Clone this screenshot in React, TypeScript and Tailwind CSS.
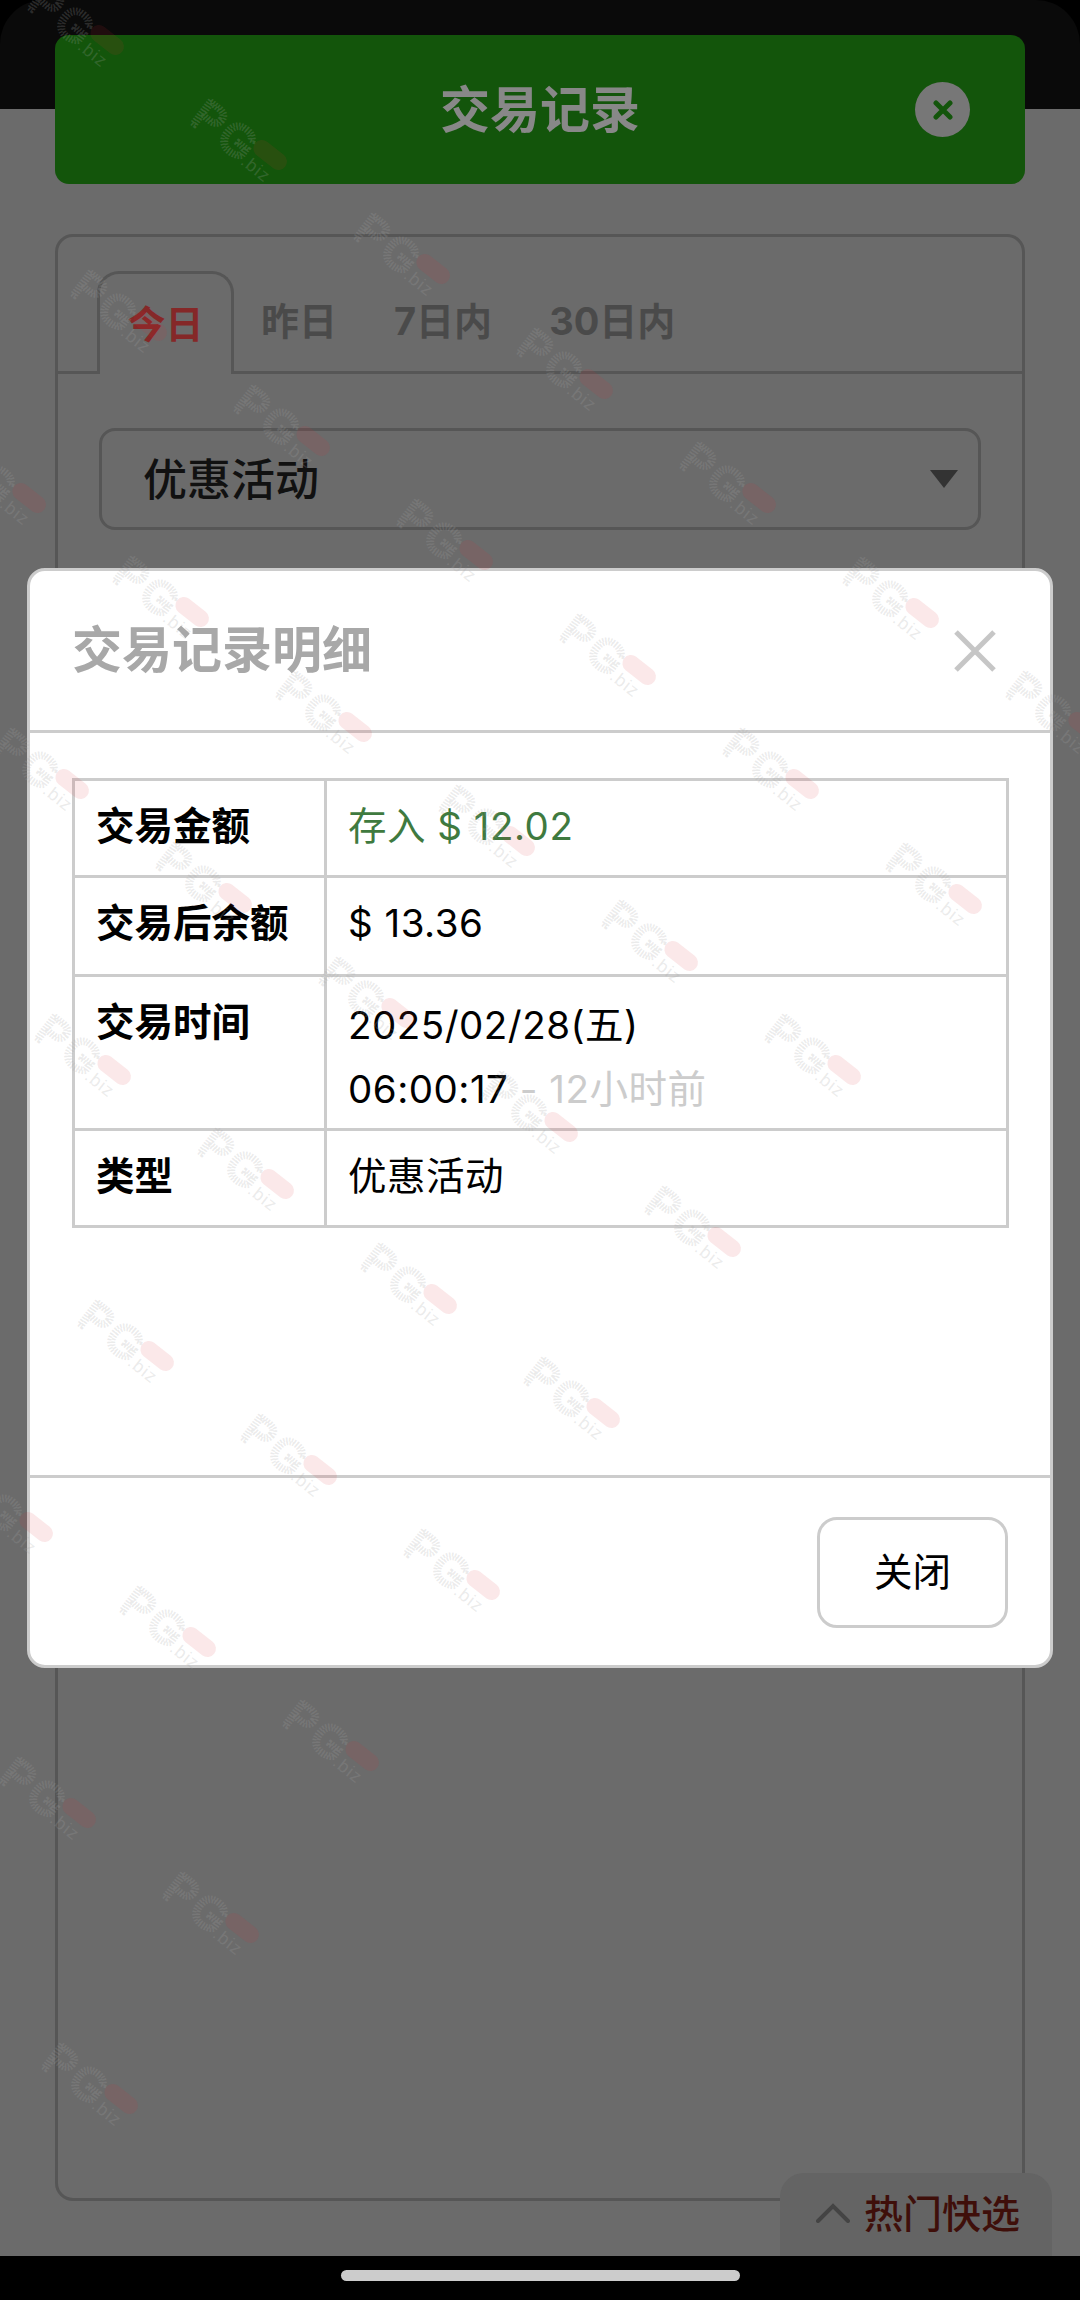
const FONT = "font-['Inter','Noto_Sans_CJK_SC',sans-serif]";

function Watermark({ x, y }: { x: number; y: number }) {
  return (
    <svg
      className="absolute overflow-visible"
      width="130"
      height="110"
      viewBox="0 0 130 110"
      style={{ left: x, top: y }}
    >
      <g transform="translate(11.5 -5.7) rotate(38)">
        <text
          x="0"
          y="24"
          fontFamily="Liberation Sans, sans-serif"
          fontSize="44"
          letterSpacing="4"
          fill="none"
          stroke="rgba(165,165,165,0.22)"
          strokeWidth="4"
          strokeDasharray="1.5 1.5"
        >
          PG
        </text>
        <rect x="66" y="-8" width="38" height="17" rx="8.5" fill="rgba(215,50,55,0.11)" />
        <text
          x="66"
          y="26"
          fontFamily="Liberation Sans, sans-serif"
          fontSize="18"
          letterSpacing="1"
          fill="rgba(165,165,165,0.22)"
        >
          .biz
        </text>
      </g>
    </svg>
  );
}

function Watermarks() {
  const marks: { x: number; y: number }[] = [];
  for (let j = 0; j < 10; j++) {
    for (let i = -3; i + j <= 6; i++) {
      const x = 29 + i * 163 + j * 42.5;
      const y = -7 + i * 114.5 + j * 286;
      if (x > -70 && x < 1080 && y > -40 && y < 2160) marks.push({ x, y });
    }
  }
  return (
    <div className="absolute inset-0 overflow-hidden pointer-events-none">
      {marks.map((m) => (
        <Watermark key={`${m.x}-${m.y}`} x={m.x} y={m.y} />
      ))}
    </div>
  );
}

function Background() {
  return (
    <div className="flex h-full flex-col">
      <div className="h-[109px] shrink-0 rounded-t-[44px] bg-[#0a0a0a]" />
      <div className="flex min-h-0 flex-1 flex-col bg-[#6b6b6b] px-[55px]">
        <div className="relative -mt-[74px] flex h-[149px] shrink-0 items-center justify-center rounded-[14px] bg-[#13550b]">
          <span className="text-[50px] font-bold leading-none text-[#888888]">交易记录</span>
          <div className="absolute right-[55px] top-[47px] flex h-[55px] w-[55px] items-center justify-center rounded-full bg-[#777777]">
            <svg width="20" height="20" viewBox="0 0 20 20" fill="none" stroke="#13550b" strokeWidth="5" strokeLinecap="round">
              <path d="M3 3 L17 17 M17 3 L3 17" />
            </svg>
          </div>
        </div>
        <div className="mt-[50px] mb-[55px] flex min-h-0 flex-1 flex-col rounded-[18px] border-[3px] border-[#565656]">
          <div className="flex h-[137px] shrink-0 items-end border-b-[3px] border-[#565656] pl-[39px]">
            <div className="-mb-[3px] flex h-[103px] w-[137px] items-center justify-center rounded-t-[22px] border-[3px] border-b-0 border-[#565656] bg-[#6b6b6b] text-[38px] font-bold text-[#852828]">
              今日
            </div>
            <div className="mb-[26px] ml-[27px] flex gap-[57px] text-[38px] font-bold leading-[48px] text-[#4a4a4a]">
              <span>昨日</span>
              <span>7日内</span>
              <span>30日内</span>
            </div>
          </div>
          <div className="mx-[41px] mt-[54px] flex h-[102px] items-center justify-between rounded-[16px] border-[3px] border-[#565656] pl-[41px] pr-[20px]">
            <span className="translate-y-[1px] text-[44px] font-medium text-[#111111]">优惠活动</span>
            <svg width="28" height="18" viewBox="0 0 28 18">
              <path d="M0 0 H28 L14 18 Z" fill="#333333" />
            </svg>
          </div>
        </div>
      </div>
      <div className="flex h-[44px] shrink-0 justify-center bg-black pt-[14px]">
        <div className="h-[11px] w-[399px] rounded-full bg-[#cccccc]" />
      </div>
    </div>
  );
}

function Row({ label, h, children }: { label: string; h: string; children: React.ReactNode }) {
  return (
    <tr className={h}>
      <th className="w-[252px] border-[3px] border-[#cccccc] px-[21px] pt-[14px] text-left align-top text-[38.5px] font-bold leading-[62px] text-black">
        {label}
      </th>
      <td className="border-[3px] border-[#cccccc] px-[21px] pt-[14px] align-top text-[38.5px] leading-[62px] tracking-[0.5px] text-black">
        {children}
      </td>
    </tr>
  );
}

function Modal() {
  return (
    <div className="absolute left-[27px] top-[568px] flex h-[1100px] w-[1026px] flex-col rounded-[18px] border-[3px] border-[#cccccc] bg-white">
      <div className="flex h-[162px] shrink-0 items-center justify-between border-b-[3px] border-[#cccccc] pl-[42px] pr-[54px]">
        <span className="text-[50px] font-bold text-[#a8a8a8]">交易记录明细</span>
        <svg width="42" height="42" viewBox="0 0 42 42" fill="none" stroke="#c6c6c6" strokeWidth="5">
          <path d="M2 2 L40 40 M40 2 L2 40" />
        </svg>
      </div>
      <div className="min-h-0 flex-1 border-b-[3px] border-[#cccccc] px-[42px] pt-[45px]">
        <table className="w-[937px] table-fixed border-collapse">
          <tbody>
            <Row label="交易金额" h="h-[97px]">
              <span className="text-[#3f7a3f]">存入 $ 12.02</span>
            </Row>
            <Row label="交易后余额" h="h-[99px]">
              $ 13.36
            </Row>
            <Row label="交易时间" h="h-[154px]">
              <div className="mt-[2px] leading-[64px]">2025/02/28(五)</div>
              <div className="leading-[64px]">
                06:00:17 <span className="text-[#cccccc]">- 12小时前</span>
              </div>
            </Row>
            <Row label="类型" h="h-[97px]">
              优惠活动
            </Row>
          </tbody>
        </table>
      </div>
      <div className="flex h-[187px] shrink-0 justify-end px-[42px] pt-[39px]">
        <button className="h-[111px] w-[191px] rounded-[20px] border-[3px] border-[#cccccc] bg-white text-[38.5px] text-black">
          关闭
        </button>
      </div>
    </div>
  );
}

function HotButton() {
  return (
    <div className="absolute left-[780px] top-[2173px] flex h-[83px] w-[272px] items-start gap-[14px] rounded-t-[24px] bg-[#646464] pl-[36px] pt-[18px]">
      <svg className="mt-[12px]" width="34" height="20" viewBox="0 0 34 20" fill="none" stroke="#444444" strokeWidth="4" strokeLinecap="round">
        <path d="M2 18 L17 3 L32 18" />
      </svg>
      <span className="text-[39px] font-medium leading-[46px] text-[#3f0f0a]">热门快选</span>
    </div>
  );
}

export default function App() {
  return (
    <div className={`relative h-[2300px] w-[1080px] overflow-hidden bg-black ${FONT}`}>
      <Background />
      <Modal />
      <HotButton />
      <Watermarks />
    </div>
  );
}
